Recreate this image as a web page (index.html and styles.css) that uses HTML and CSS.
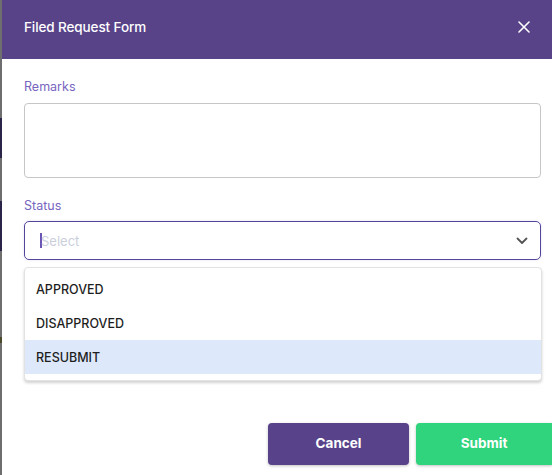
FILE: index.html
```html
<!DOCTYPE html>
<html>
<head>
<meta charset="utf-8">
<link rel="stylesheet" href="styles.css">
</head>
<body>
<div class="page">
  <div class="backdrop-strip">
    <span class="blk b1"></span>
    <span class="blk b2"></span>
    <span class="blk b3"></span>
  </div>
  <div class="modal">
    <div class="header">
      <span class="title">Filed Request Form</span>
      <svg class="close" width="12" height="12" viewBox="0 0 12 12"><path d="M1 1L11 11M11 1L1 11" stroke="#fff" stroke-width="1.6" stroke-linecap="round"/></svg>
    </div>
    <div class="body">
      <label class="label">Remarks</label>
      <div class="textarea"></div>
      <label class="label status-label">Status</label>
      <div class="select">
        <span class="caret"></span><span class="placeholder">Select</span>
        <svg class="chev" width="12" height="8" viewBox="0 0 12 8"><path d="M1.5 1.5L6 6L10.5 1.5" fill="none" stroke="#555" stroke-width="1.8" stroke-linecap="round" stroke-linejoin="round"/></svg>
      </div>
      <div class="menu-wrap">
        <ul class="menu">
          <li class="item">APPROVED</li>
          <li class="item">DISAPPROVED</li>
          <li class="item active">RESUBMIT</li>
        </ul>
      </div>
      <div class="actions">
        <button class="btn cancel">Cancel</button>
        <button class="btn submit">Submit</button>
      </div>
    </div>
  </div>
</div>
</body>
</html>
```
FILE: styles.css
```css
* { box-sizing: border-box; }
html, body { margin: 0; padding: 0; }
body {
  width: 552px;
  height: 475px;
  overflow: hidden;
  font-family: Inter, "Noto Sans", sans-serif;
  background: #fff;
}
.page {
  display: flex;
  height: 475px;
}
.backdrop-strip {
  width: 2px;
  flex: none;
  background: #6e6e6e;
  display: flex;
  flex-direction: column;
}
.blk { display: block; width: 2px; }
.b1 { height: 40px; margin-top: 118px; background: #2a2448; }
.b2 { height: 50px; margin-top: 43px; background: #2a2448; }
.b3 { height: 6px; margin-top: 86px; background: #4a4a2a; }
.modal {
  flex: 1;
  display: flex;
  flex-direction: column;
}
.header {
  height: 59px;
  background: #584389;
  display: flex;
  align-items: center;
  justify-content: space-between;
  padding: 0 22px 0 22px;
}
.title {
  color: #fff;
  font-size: 13.5px;
  font-weight: 500;
  letter-spacing: -0.1px;
  margin-top: -6px;
}
.close { margin-top: -6px; }
.body {
  padding: 20px 11px 0 22px;
  display: flex;
  flex-direction: column;
}
.label {
  font-size: 12.5px;
  color: #7765c0;
  line-height: 15px;
  height: 15px;
}
.textarea {
  margin-top: 9px;
  height: 75px;
  border: 1px solid #c6c6c6;
  border-radius: 4px;
}
.status-label { margin-top: 20px; }
.select {
  margin-top: 8px;
  height: 39px;
  border: 1px solid #54449a;
  border-radius: 5px;
  display: flex;
  align-items: center;
  padding: 0 12px 0 15px;
  box-shadow: 0 0 3px rgba(120, 100, 200, 0.18);
}
.caret {
  width: 2px;
  height: 15px;
  background: #6a55b5;
}
.placeholder {
  font-size: 13px;
  color: #cbcfdc;
  margin-left: -1px;
  flex: 1;
}
.chev { margin-right: 0; }
.menu-wrap { margin-top: 7px; padding-right: 0; }
.menu {
  list-style: none;
  margin: 0 -1px 0 0;
  padding: 4px 0 6px 0;
  border: 1px solid #e2e2e2;
  border-radius: 4px;
  box-shadow: 0 2px 3px rgba(0, 0, 0, 0.18);
  background: #fff;
}
.item {
  height: 34px;
  display: flex;
  align-items: center;
  padding-left: 11px;
  font-size: 12.5px;
  color: #1e1e1e;
  font-weight: 500;
}
.item.active { background: #dde9fb; }
.actions {
  margin-top: 42px;
  display: flex;
  justify-content: flex-end;
  gap: 7px;
  margin-right: -11px;
}
.btn {
  height: 42px;
  border: none;
  border-radius: 4px;
  color: #fff;
  font-family: Inter, "Noto Sans", sans-serif;
  font-size: 13.5px;
  font-weight: 700;
  padding: 0 0 3px 0;
  box-shadow: 0 1px 3px rgba(0, 0, 0, 0.25);
}
.cancel { width: 141px; background: #58438a; }
.submit { width: 136px; background: #2fd47d; border-radius: 4px 0 0 4px; }
```
